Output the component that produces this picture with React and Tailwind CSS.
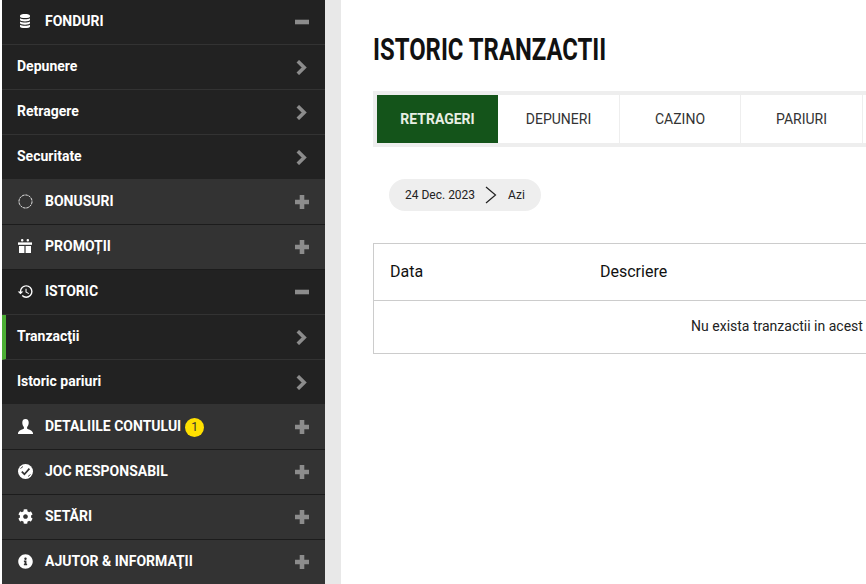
import React from "react";
import { FaCog, FaInfoCircle } from "react-icons/fa";
import { MdHistory } from "react-icons/md";

function Plus() {
    return (
        <svg width="14" height="14" viewBox="0 0 14 14" className="block fill-[#8c8c8c]">
            <path d="M4.7 0h4.6v4.7H14v4.6H9.3V14H4.7V9.3H0V4.7h4.7z" />
        </svg>
    );
}

function Minus() {
    return (
        <svg width="14" height="14" viewBox="0 0 14 14" className="block fill-[#8c8c8c]">
            <path d="M0 4.7h14v4.6H0z" />
        </svg>
    );
}

function Chevron() {
    return (
        <svg width="11" height="15" viewBox="0 0 11 15" fill="none" className="block stroke-[#8c8c8c]">
            <path d="M1.8 1.2 8.2 7.5 1.8 13.8" strokeWidth="3.6" />
        </svg>
    );
}

function DatabaseIcon() {
    return (
        <svg width="10" height="14" viewBox="0 0 10 14" className="fill-white">
            <path d="M5 0C2.2 0 0 .7 0 1.6v.9c0 .9 2.2 1.6 5 1.6s5-.7 5-1.6v-.9C10 .7 7.8 0 5 0z" />
            <path d="M0 4.2v1.6c0 .9 2.2 1.6 5 1.6s5-.7 5-1.6V4.2C9 5 7.2 5.2 5 5.2S1 5 0 4.2z" />
            <path d="M0 7.5v1.6c0 .9 2.2 1.6 5 1.6s5-.7 5-1.6V7.5c-1 .8-2.8 1-5 1s-4-.2-5-1z" />
            <path d="M0 10.8v1.6C0 13.3 2.2 14 5 14s5-.7 5-1.6v-1.6c-1 .8-2.8 1-5 1s-4-.2-5-1z" />
        </svg>
    );
}

function BonusIcon() {
    return (
        <svg width="15" height="15" viewBox="0 0 15 15" fill="none" className="stroke-white">
            <circle cx="7.5" cy="7.5" r="6.5" strokeWidth="1" strokeDasharray="2.4 0.9" />
        </svg>
    );
}

function GiftIcon() {
    return (
        <svg width="14" height="14" viewBox="0 0 14 14" className="fill-white">
            <rect x="3" y="0" width="2.4" height="2.4" rx="1" />
            <rect x="8.6" y="0" width="2.4" height="2.4" rx="1" />
            <rect x="0" y="3.4" width="14" height="2.4" />
            <rect x="1" y="7" width="5.4" height="7" />
            <rect x="7.6" y="7" width="5.4" height="7" />
        </svg>
    );
}

function UserIcon() {
    return (
        <svg width="15" height="15" viewBox="0 0 14 14" className="fill-white">
            <path d="M7 0C4.8 0 4 1.6 4 3.6c0 1.7.7 3 1.5 3.9v1.5C3.5 9.8.5 10.6 0 13v1h14v-1c-.5-2.4-3.5-3.2-5.5-4V7.5c.8-.9 1.5-2.2 1.5-3.9C10 1.6 9.2 0 7 0z" />
        </svg>
    );
}

function ResponsibleIcon() {
    return (
        <svg width="15" height="15" viewBox="0 0 15 15">
            <circle cx="7.5" cy="7.5" r="7.5" fill="#fff" />
            <path d="M3.8 7.6 6.4 10.2 11.4 4.6" fill="none" stroke="#333333" strokeWidth="1.7" />
            <path d="M2.5 4.5 5 2.5M10 12.5l2.5-2" fill="none" stroke="#333333" strokeWidth="0.9" />
        </svg>
    );
}

function Section({ icon, label, open, badge }) {
    return (
        <div className={`flex h-[45px] items-center border-b pr-4 ${open ? "border-[#333333] bg-[#222222]" : "border-[#1c1c1c] bg-[#333333]"}`}>
            <div className="flex w-[43px] shrink-0 justify-center pb-0.5 pl-[3px] text-[15px] text-white">{icon}</div>
            <span className="pb-0.5 text-[14px] font-bold text-white">{label}</span>
            {badge && (
                <span className="ml-1 flex h-[19px] w-[19px] items-center justify-center rounded-full bg-[#ffe000] text-[12px] text-[#333333]">
                    {badge}
                </span>
            )}
            <div className="ml-auto">{open ? <Minus /> : <Plus />}</div>
        </div>
    );
}

function SubItem({ label, active }) {
    return (
        <div className={`flex h-[45px] items-center border-b border-[#333333] bg-[#222222] pr-[18px] ${active ? "border-l-4 border-l-[#4caf35] pl-[11px]" : "pl-[15px]"}`}>
            <span className="pb-0.5 text-[14px] font-bold text-white">{label}</span>
            <div className="ml-auto"><Chevron /></div>
        </div>
    );
}

export default function App() {
    return (
        <div className="flex h-[584px] w-[866px] overflow-hidden bg-white font-['Roboto',sans-serif]">
            <div className="ml-[2px] w-[323px] shrink-0">
                <Section icon={<DatabaseIcon />} label="FONDURI" open />
                <SubItem label="Depunere" />
                <SubItem label="Retragere" />
                <SubItem label="Securitate" />
                <Section icon={<BonusIcon />} label="BONUSURI" />
                <Section icon={<GiftIcon />} label="PROMOȚII" />
                <Section icon={<MdHistory size={17} />} label="ISTORIC" open />
                <SubItem label="Tranzacţii" active />
                <SubItem label="Istoric pariuri" />
                <Section icon={<UserIcon />} label="DETALIILE CONTULUI" badge="1" />
                <Section icon={<ResponsibleIcon />} label="JOC RESPONSABIL" />
                <Section icon={<FaCog />} label="SETĂRI" />
                <Section icon={<FaInfoCircle />} label="AJUTOR & INFORMAŢII" />
            </div>
            <div className="w-4 shrink-0 bg-[#e8e8e8]" />
            <div className="w-[808px] shrink-0 pl-8">
                <h1 className="mt-[33px] origin-left scale-x-[0.77] text-[31px] leading-[34px] font-bold whitespace-nowrap text-[#111111]">
                    ISTORIC TRANZACTII
                </h1>
                <div className="mt-[24px] flex h-[56px] w-[776px] border-4 border-[#eeeeee] text-[14px] text-[#333333]">
                    <div className="flex w-[121px] items-center justify-center bg-[#14541a] font-bold text-[#e8efe4]">RETRAGERI</div>
                    <div className="flex w-[122px] items-center justify-center border-r border-[#eeeeee]">DEPUNERI</div>
                    <div className="flex w-[121px] items-center justify-center border-r border-[#eeeeee]">CAZINO</div>
                    <div className="flex w-[122px] items-center justify-center border-r border-[#eeeeee]">PARIURI</div>
                </div>
                <div className="mt-[32px] ml-4 flex h-8 w-[152px] items-center rounded-full bg-[#eeeeee] pl-4 text-[12px] text-[#222222]">
                    <span>24 Dec. 2023</span>
                    <svg width="12" height="18" viewBox="0 0 12 18" fill="none" className="mr-[11px] ml-[10px] shrink-0 stroke-[#222222]">
                        <path d="M1 1l9.5 8L1 17" strokeWidth="1.2" />
                    </svg>
                    <span>Azi</span>
                </div>
                <div className="mt-[32px] w-[808px] border border-[#cccccc] text-[#222222]">
                    <div className="flex h-[57px] items-center border-b border-[#cccccc] text-[16px] text-[#111111]">
                        <span className="w-[226px] pl-4">Data</span>
                        <span>Descriere</span>
                    </div>
                    <div className="flex h-[52px] items-center justify-center pb-0.5 text-[14px]">
                        Nu exista tranzactii in acest
                    </div>
                </div>
            </div>
        </div>
    );
}
